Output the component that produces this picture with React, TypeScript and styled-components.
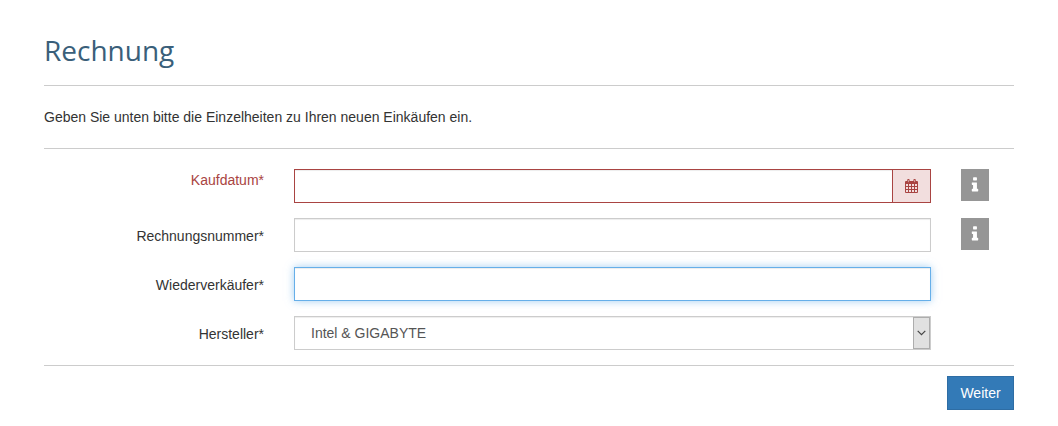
import React from "react";
import styled, { createGlobalStyle, css } from "styled-components";

const GlobalStyle = createGlobalStyle`
  *, *::before, *::after { box-sizing: border-box; }
  body {
    margin: 0;
    background: #fff;
    color: #333;
    font-family: "Liberation Sans", Arial, sans-serif;
    font-size: 14px;
    line-height: 20px;
  }
`;

const Page = styled.main`
  padding: 30px 44px 16px;
`;

const Title = styled.h1`
  margin: 0 0 15px;
  color: #3a5f7a;
  font-family: "Open Sans", sans-serif;
  font-size: 28px;
  font-weight: 400;
  line-height: 40px;
`;

const Intro = styled.p`
  margin: 0;
  padding: 21px 0;
  border-top: 1px solid #ccc;
`;

const Fields = styled.div`
  display: grid;
  row-gap: 15px;
  padding: 20px 0 15px;
  border-top: 1px solid #ccc;
  border-bottom: 1px solid #ccc;
`;

const Row = styled.div`
  display: grid;
  grid-template-columns: repeat(12, minmax(0, 1fr));
  column-gap: 30px;
  align-items: start;
`;

const Label = styled.label<{ $invalid?: boolean }>`
  grid-column: span 3;
  padding-top: ${(p) => (p.$invalid ? 1 : 8)}px;
  color: ${(p) => (p.$invalid ? "#a94442" : "#333")};
  text-align: right;
`;

const Control = styled.div`
  grid-column: span 8;
  display: flex;
  position: relative;
`;

const fieldBox = css`
  flex: 1;
  min-width: 0;
  height: 34px;
  margin: 0;
  border: 1px solid #ccc;
  border-radius: 0;
  outline: 0;
  background: #fff;
  color: #555;
  font: inherit;
  box-shadow: inset 0 1px 1px rgba(0, 0, 0, 0.075);
`;

const TextInput = styled.input<{ $state?: "invalid" | "active" }>`
  ${fieldBox}
  padding: 6px 12px;
  ${(p) => p.$state === "invalid" && css`border-color: #a94442;`}
  ${(p) =>
    p.$state === "active" &&
    css`
      border-color: #66afe9;
      box-shadow: inset 0 1px 1px rgba(0, 0, 0, 0.075), 0 0 8px rgba(102, 175, 233, 0.6);
    `}
`;

const DateButton = styled.button`
  display: flex;
  align-items: center;
  justify-content: center;
  width: 38px;
  padding: 0;
  border: 1px solid #a94442;
  border-left: 0;
  background: #f2dede;
  color: #a94442;
`;

const Select = styled.select`
  ${fieldBox}
  appearance: none;
  padding: 0 32px 0 16px;
`;

const SelectArrow = styled.span`
  position: absolute;
  top: 1px;
  right: 1px;
  bottom: 1px;
  display: flex;
  align-items: center;
  justify-content: center;
  width: 17px;
  border: 1px solid #adadad;
  background: #e1e1e1;
  pointer-events: none;
`;

const InfoButton = styled.button`
  display: flex;
  align-items: center;
  justify-content: center;
  width: 28px;
  height: 32px;
  padding: 0;
  border: 0;
  background: #969696;
  color: #fff;
`;

const Actions = styled.div`
  display: flex;
  justify-content: flex-end;
  padding-top: 10px;
`;

const SubmitButton = styled.button`
  min-width: 67px;
  padding: 6px 12px;
  border: 1px solid #2e6da4;
  background: #337ab7;
  color: #fff;
  font: inherit;
`;

const CalendarIcon = () => (
  <svg width="13" height="14" viewBox="0 0 13 14" fill="currentColor" aria-hidden="true">
    <path
      fillRule="evenodd"
      d="M1 2H12Q13 2 13 3V13Q13 14 12 14H1Q0 14 0 13V3Q0 2 1 2Z
        M1 5V7H3V5Z M4 5V7H6V5Z M7 5V7H9V5Z M10 5V7H12V5Z
        M1 8V10H3V8Z M4 8V10H6V8Z M7 8V10H9V8Z M10 8V10H12V8Z
        M1 11V13H3V11Z M4 11V13H6V11Z M7 11V13H9V11Z M10 11V13H12V11Z"
    />
    <rect x="2.2" y="0" width="2.4" height="4" rx="1" />
    <rect x="8.4" y="0" width="2.4" height="4" rx="1" />
    <path d="M3.4 1V3.2M9.6 1V3.2" stroke="#f2dede" strokeWidth="0.6" />
  </svg>
);

const InfoIcon = () => (
  <svg width="18" height="18" viewBox="0 0 1792 1792" fill="currentColor" aria-hidden="true">
    <path d="M1216 1344v128q0 26-19 45t-45 19h-512q-26 0-45-19t-19-45v-128q0-26 19-45t45-19h64v-384h-64q-26 0-45-19t-19-45v-128q0-26 19-45t45-19h384q26 0 45 19t19 45v576h64q26 0 45 19t19 45zm-128-1152v192q0 26-19 45t-45 19h-256q-26 0-45-19t-19-45v-192q0-26 19-45t45-19h256q26 0 45 19t19 45z" />
  </svg>
);

const ChevronIcon = () => (
  <svg width="9" height="6" viewBox="0 0 9 6" fill="none" stroke="#444" strokeWidth="1.2" aria-hidden="true">
    <path d="M0.7 0.8 L4.5 4.6 L8.3 0.8" />
  </svg>
);

export default function App() {
  return (
    <>
      <GlobalStyle />
      <Page>
        <Title>Rechnung</Title>
        <Intro>Geben Sie unten bitte die Einzelheiten zu Ihren neuen Einkäufen ein.</Intro>
        <form onSubmit={(e) => e.preventDefault()}>
          <Fields>
            <Row>
              <Label htmlFor="kaufdatum" $invalid>Kaufdatum*</Label>
              <Control>
                <TextInput id="kaufdatum" type="text" aria-invalid="true" $state="invalid" />
                <DateButton type="button" aria-label="Kalender"><CalendarIcon /></DateButton>
              </Control>
              <InfoButton type="button" aria-label="Info Kaufdatum"><InfoIcon /></InfoButton>
            </Row>
            <Row>
              <Label htmlFor="rechnungsnummer">Rechnungsnummer*</Label>
              <Control>
                <TextInput id="rechnungsnummer" type="text" />
              </Control>
              <InfoButton type="button" aria-label="Info Rechnungsnummer"><InfoIcon /></InfoButton>
            </Row>
            <Row>
              <Label htmlFor="wiederverkaeufer">Wiederverkäufer*</Label>
              <Control>
                <TextInput id="wiederverkaeufer" type="text" $state="active" />
              </Control>
            </Row>
            <Row>
              <Label htmlFor="hersteller">Hersteller*</Label>
              <Control>
                <Select id="hersteller" defaultValue="intel-gigabyte">
                  <option value="intel-gigabyte">Intel &amp; GIGABYTE</option>
                </Select>
                <SelectArrow><ChevronIcon /></SelectArrow>
              </Control>
            </Row>
          </Fields>
          <Actions>
            <SubmitButton type="submit">Weiter</SubmitButton>
          </Actions>
        </form>
      </Page>
    </>
  );
}
